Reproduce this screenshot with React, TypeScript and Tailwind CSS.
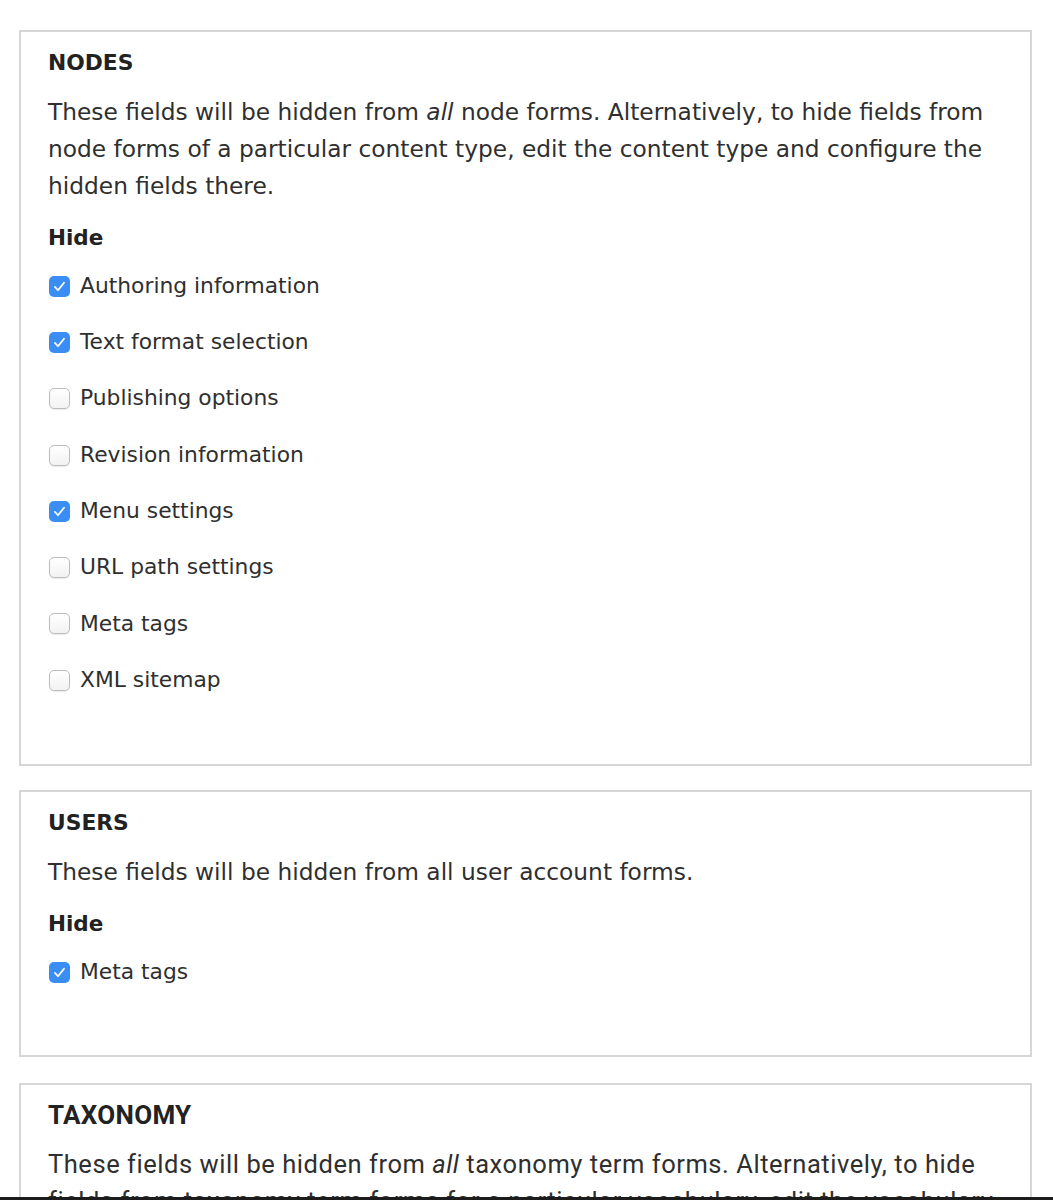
import React from "react";

const NODE_FIELDS: { label: string; checked: boolean }[] = [
  { label: "Authoring information", checked: true },
  { label: "Text format selection", checked: true },
  { label: "Publishing options", checked: false },
  { label: "Revision information", checked: false },
  { label: "Menu settings", checked: true },
  { label: "URL path settings", checked: false },
  { label: "Meta tags", checked: false },
  { label: "XML sitemap", checked: false },
];

const USER_FIELDS = [{ label: "Meta tags", checked: true }];

export default function App() {
  return (
    <div className="flex h-[1200px] flex-col overflow-hidden bg-white text-[#2f2f2f] [font-family:'Lucida_Grande','DejaVu_Sans',sans-serif]">
      <div className="flex flex-1 flex-col overflow-hidden pl-[19px] pr-[21px] pt-[30px]">
        <Section title="NODES" pb="pb-[56px]">
          <p className="mt-[16px] text-[23.3px] leading-[37px]">
            These fields will be hidden from <em>all</em> node forms. Alternatively, to hide fields from node forms of a
            particular content type, edit the content type and configure the hidden fields there.
          </p>
          <Checkboxes items={NODE_FIELDS} />
        </Section>

        <div className="mt-[24px]">
          <Section title="USERS" pb="pb-[54px]">
            <p className="mt-[16px] text-[23.3px] leading-[37px]">These fields will be hidden from all user account forms.</p>
            <Checkboxes items={USER_FIELDS} />
          </Section>
        </div>

        <section className="mt-[26px] shrink-0 border-2 border-[#d6d6d6] px-[27px] pt-[15px] pb-[56px] [font-family:Roboto,'Noto_Sans',sans-serif]">
          <h2 className="text-[26px] font-bold leading-[30px] tracking-[0.3px] text-[#222]">TAXONOMY</h2>
          <p className="mt-[16px] text-[25.5px] leading-[37px] tracking-[0.55px]">
            These fields will be hidden from <em>all</em> taxonomy term forms. Alternatively, to hide fields from
            taxonomy term forms for a particular vocabulary, edit the vocabulary and configure the hidden fields there.
          </p>
        </section>
      </div>
      <div className="h-[3px] shrink-0 bg-[#1c1c1c]" />
    </div>
  );
}

function Section({ title, pb, children }: { title: string; pb: string; children: React.ReactNode }) {
  return (
    <section className={`shrink-0 border-2 border-[#d6d6d6] px-[27px] pt-[17px] ${pb}`}>
      <h2 className="text-[21.8px] font-bold leading-[28px] text-[#222]">{title}</h2>
      {children}
    </section>
  );
}

function Checkboxes({ items }: { items: { label: string; checked: boolean }[] }) {
  return (
    <div>
      <h3 className="mt-[20px] text-[21.5px] font-bold leading-[28px] text-[#222]">Hide</h3>
      <div className="mt-[6px] flex flex-col">
        {items.map((it) => (
          <label key={it.label} className="flex h-[56.3px] items-center gap-[10px] text-[21.8px]">
            <Box checked={it.checked} />
            <span>{it.label}</span>
          </label>
        ))}
      </div>
    </div>
  );
}

function Box({ checked }: { checked: boolean }) {
  if (checked) {
    return (
      <span className="ml-[1px] flex h-[21px] w-[21px] shrink-0 items-center justify-center rounded-[5px] bg-[#3a8ef3]">
        <svg width="13" height="13" viewBox="0 0 13 13" fill="none">
          <path d="M2 7l3 3.2L11 2.8" stroke="white" strokeWidth="1.8" strokeLinecap="round" strokeLinejoin="round" />
        </svg>
      </span>
    );
  }
  return (
    <span className="ml-[1px] h-[21px] w-[21px] shrink-0 rounded-[5px] border border-[#bdbdbd] bg-gradient-to-b from-white to-[#f2f2f2] shadow-[0_1px_1px_rgba(0,0,0,0.08)]" />
  );
}
